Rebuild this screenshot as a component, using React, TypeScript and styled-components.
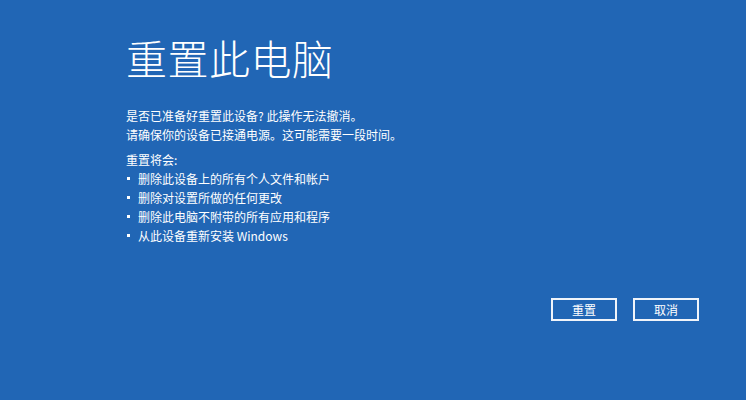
import React from "react"
import styled, { createGlobalStyle } from "styled-components"

const GlobalStyle = createGlobalStyle`
  html, body {
    margin: 0;
    padding: 0;
    background: #2166b5;
  }
  body {
    font-family: "Noto Sans CJK SC", "Noto Sans", sans-serif;
    color: #ffffff;
  }
`

const Screen = styled.main`
  width: 746px;
  height: 400px;
  background: #2166b5;
  box-sizing: border-box;
  padding: 31px 47px 0 126px;
  display: flex;
  flex-direction: column;
  overflow: hidden;
`

const Title = styled.h1`
  margin: 0;
  font-size: 41px;
  font-weight: 300;
  line-height: 52px;
  letter-spacing: 0.5px;
`

const Paragraph = styled.div`
  margin-top: 23px;
  font-size: 12px;
  line-height: 19px;
`

const Line = styled.p`
  margin: 0;
`

const Section = styled.div`
  margin-top: 6px;
  font-size: 12px;
  line-height: 19px;
`

const List = styled.ul`
  list-style: none;
  margin: 0;
  padding: 0;
`

const Item = styled.li`
  display: flex;
  align-items: center;
  gap: 8px;

  &::before {
    content: "";
    width: 3px;
    height: 3px;
    margin-left: 1px;
    background: #ffffff;
  }
`

const Actions = styled.div`
  margin-top: 53px;
  display: flex;
  justify-content: flex-end;
  gap: 16px;
`

const Button = styled.button`
  width: 66px;
  height: 23px;
  box-sizing: border-box;
  border: 2px solid #f0f4fa;
  background: transparent;
  color: #ffffff;
  font-family: "Noto Sans CJK SC", "Noto Sans", sans-serif;
  font-size: 12px;
  padding: 0;
  cursor: pointer;
`

export default function App() {
  const items = [
    "删除此设备上的所有个人文件和帐户",
    "删除对设置所做的任何更改",
    "删除此电脑不附带的所有应用和程序",
    "从此设备重新安装 Windows",
  ]
  return (
    <>
      <GlobalStyle />
      <Screen>
        <Title>重置此电脑</Title>
        <Paragraph>
          <Line>是否已准备好重置此设备? 此操作无法撤消。</Line>
          <Line>请确保你的设备已接通电源。这可能需要一段时间。</Line>
        </Paragraph>
        <Section>
          <Line>重置将会:</Line>
          <List>
            {items.map((t) => (
              <Item key={t}>{t}</Item>
            ))}
          </List>
        </Section>
        <Actions>
          <Button type="button">重置</Button>
          <Button type="button">取消</Button>
        </Actions>
      </Screen>
    </>
  )
}
